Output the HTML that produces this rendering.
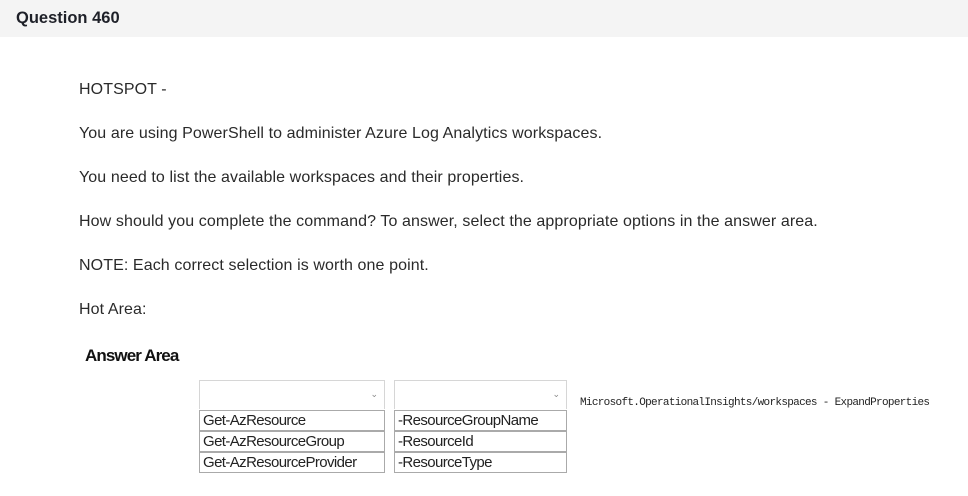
<!DOCTYPE html>
<html><head><meta charset="utf-8"><style>
*{margin:0;padding:0;box-sizing:border-box}
body{width:968px;height:496px;background:#fff;font-family:"Liberation Sans",sans-serif;position:relative;overflow:hidden;color:#222}
.hdr{position:absolute;left:0;top:0;width:968px;height:37px;background:#f4f4f4}
.hdr span{position:absolute;left:16px;top:9px;font-weight:bold;font-size:16.5px;color:#1e2028}
.p{position:absolute;left:79px;font-size:16px;letter-spacing:0.1px;color:#2a2a2a;white-space:nowrap}
.aa{position:absolute;left:85px;top:346px;font-weight:bold;font-size:17px;letter-spacing:-0.9px;color:#111}
.sel{position:absolute;height:29px;border:1px solid #d6d6d6;border-bottom:none}
.sel i{position:absolute;right:6px;top:8px;font-style:normal;font-size:9px;color:#888}
.opt{position:absolute;border:1px solid #aaa;font-size:15px;letter-spacing:-0.6px;color:#222;line-height:20px;padding-left:3px;height:21px}
.mono{position:absolute;left:580px;top:397px;font-family:"Liberation Mono",monospace;font-size:11px;letter-spacing:-0.68px;color:#222;white-space:nowrap}
</style></head><body>
<div class="hdr"><span>Question 460</span></div>
<div class="p" style="top:81px">HOTSPOT -</div>
<div class="p" style="top:125px">You are using PowerShell to administer Azure Log Analytics workspaces.</div>
<div class="p" style="top:169px">You need to list the available workspaces and their properties.</div>
<div class="p" style="top:213px">How should you complete the command? To answer, select the appropriate options in the answer area.</div>
<div class="p" style="top:257px">NOTE: Each correct selection is worth one point.</div>
<div class="p" style="top:301px">Hot Area:</div>
<div class="aa">Answer Area</div>

<div class="sel" style="left:199px;top:380px;width:186px"><i>&#8964;</i></div>
<div class="opt" style="left:199px;top:410px;width:186px">Get-AzResource</div>
<div class="opt" style="left:199px;top:431px;width:186px">Get-AzResourceGroup</div>
<div class="opt" style="left:199px;top:452px;width:186px">Get-AzResourceProvider</div>

<div class="sel" style="left:394px;top:380px;width:173px"><i>&#8964;</i></div>
<div class="opt" style="left:394px;top:410px;width:173px">-ResourceGroupName</div>
<div class="opt" style="left:394px;top:431px;width:173px">-ResourceId</div>
<div class="opt" style="left:394px;top:452px;width:173px">-ResourceType</div>

<div class="mono">Microsoft.OperationalInsights/workspaces - ExpandProperties</div>
</body></html>
